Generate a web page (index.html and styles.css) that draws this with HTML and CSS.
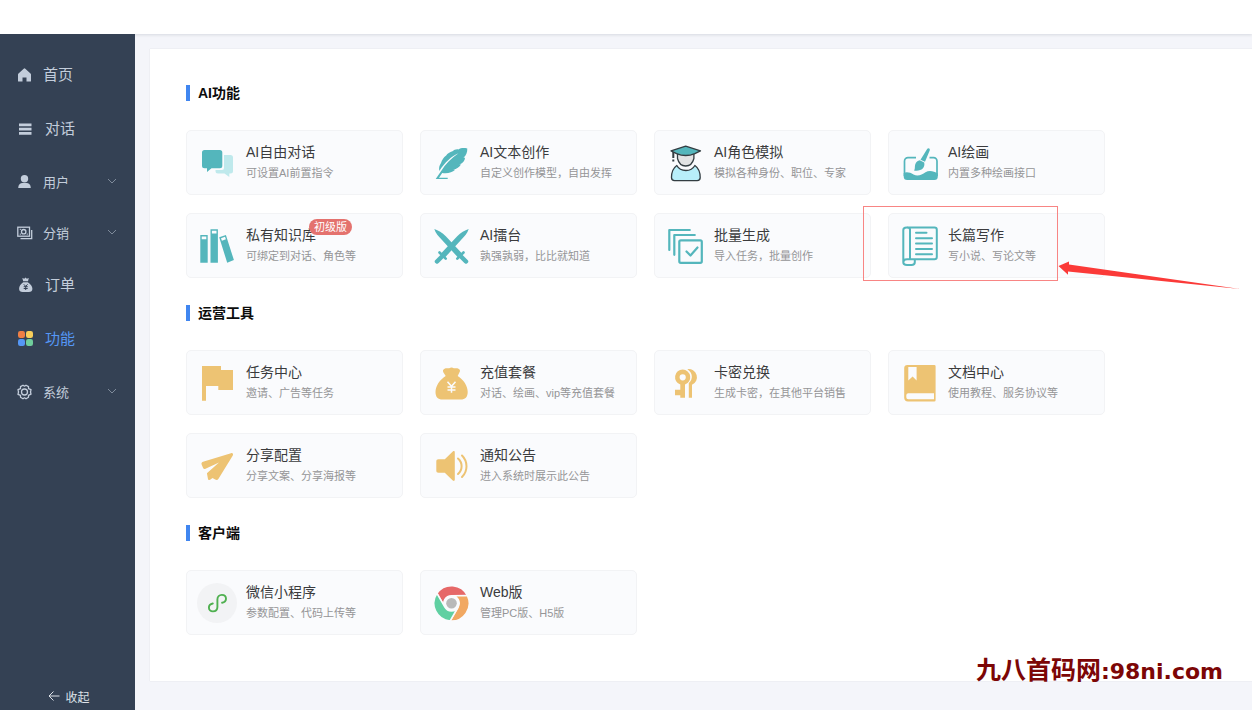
FILE: index.html
```html
<!DOCTYPE html>
<html lang="zh-CN">
<head>
<meta charset="utf-8">
<title>功能</title>
<meta name="viewport" content="width=device-width, initial-scale=1">
<link rel="stylesheet" href="styles.css">
</head>
<body>
<header class="topbar"></header>
<div class="layout">
  <aside class="sidebar">
    <nav class="menu">
      <a class="menu-item" href="#home">
        <svg class="menu-icon" viewBox="0 0 16 16"><path fill="currentColor" d="M6.700 1.700a1.200 1.200 0 0 1 1.600 0L13.500 6.400c.3.300.5.700.5 1.100V14a.6.6 0 0 1-.6.6H9.500V10.500H5.500v4.100H1.600a.6.6 0 0 1-.6-.6V7.500c0-.4.200-.8.500-1.100z"/></svg>
        <span class="menu-label">首页</span>
      </a>
      <a class="menu-item menu-item-wide" href="#chat">
        <svg class="menu-icon" viewBox="0 0 16 16"><path fill="currentColor" d="M1 2.500h12.500v2.800H1zM1 6.700h12.500v2.800H1zM1 10.900h12.500v2.800H1z"/></svg>
        <span class="menu-label">对话</span>
      </a>
      <button class="menu-item menu-group" type="button">
        <svg class="menu-icon" viewBox="0 0 16 16"><circle cx="7.500" cy="4.700" r="3.700" fill="currentColor"/><path fill="currentColor" d="M1.200 14c0-3.200 2-5 4.300-5h4c2.300 0 4.300 1.800 4.300 5z"/></svg>
        <span>用户</span>
        <svg class="chevron" viewBox="0 0 10 10"><path d="M1 2l4 4 4-4"/></svg>
      </button>
      <button class="menu-item menu-group" type="button">
        <svg class="menu-icon" viewBox="0 0 16 16" fill="none" stroke="currentColor" stroke-width="1.300"><rect x=".8" y="2.200" width="11.700" height="9"/><circle cx="6.700" cy="6.700" r="2.200"/><path d="M14.700 5v8.700H3.500M2.800 4.300h1M2.800 9.200h1M9.700 9.200h1"/></svg>
        <span>分销</span>
        <svg class="chevron" viewBox="0 0 10 10"><path d="M1 2l4 4 4-4"/></svg>
      </button>
      <a class="menu-item menu-item-wide" href="#orders">
        <svg class="menu-icon" viewBox="0 0 16 16"><path fill="currentColor" d="M4.300 1l2 .8L7.500.500l1.300 1.300 2-.8-.8 3.300H5.200zM5.200 5.200h4.600c2.800 1.700 4.600 4.300 4.600 6.500 0 2.300-1.300 3.300-3.500 3.300H4.600c-2.200 0-3.500-1-3.500-3.300 0-2.200 1.400-4.800 4.100-6.500z"/><path fill="none" stroke="#344154" d="M5.800 7.300l1.900 2 1.900-2M7.700 9.300v3.700M5.700 9.700h4M5.700 11.500h4"/></svg>
        <span class="menu-label">订单</span>
      </a>
      <a class="menu-item menu-item-wide active" href="#features" aria-current="page">
        <svg class="menu-icon" viewBox="0 0 16 16"><rect x="0" y="0" width="7" height="7" rx="2.200" fill="#ee7f45"/><rect x="8" y="0" width="7" height="7" rx="2.200" fill="#f8ce5b"/><rect x="0" y="8" width="7" height="7" rx="2.200" fill="#5597f5"/><rect x="8" y="8" width="7" height="7" rx="2.200" fill="#6fce9c"/></svg>
        <span class="menu-label">功能</span>
      </a>
      <button class="menu-item menu-group" type="button">
        <svg class="menu-icon" viewBox="0 0 16 16" fill="none" stroke="currentColor" stroke-width="1.300"><path stroke-linejoin="round" d="M6 1.200l1.500 1 1.500-1 2.500 1.400v2l2.500 1-.500 2.400.5 2.200-2.500 1.200v1.800L9 14.800l-1.500-1-1.500 1-2.500-1.500v-1.900L1 10.300 1.500 8 1 5.700l2.500-1.100v-2z"/><circle cx="7.500" cy="8" r="3"/></svg>
        <span>系统</span>
        <svg class="chevron" viewBox="0 0 10 10"><path d="M1 2l4 4 4-4"/></svg>
      </button>
    </nav>
    <button class="collapse" type="button">
      <svg class="collapse-icon" viewBox="0 0 12 12"><path d="M11.500 6H1M5.500 1.500L1 6l4.500 4.500"/></svg>
      <span>收起</span>
    </button>
  </aside>

  <main class="content">
    <div class="panel">
      <section class="section">
        <h2 class="section-title">AI功能</h2>
        <div class="cards">
          <a class="card" href="#free-chat">
            <svg class="card-icon" viewBox="0 0 40 40"><path fill="#bfe9ec" d="M27 12h6.500a2.500 2.500 0 0 1 2.500 2.500v13.500a2.500 2.500 0 0 1-2.500 2.500h-1.200v3.500l-4.800-3.500h-6.500a2.500 2.500 0 0 1-2.500-2.500V27H25a2 2 0 0 0 2-2z"/><path fill="#54b6bc" d="M7.500 7h15.300a2.500 2.500 0 0 1 2.500 2.500v13.300a2.500 2.500 0 0 1-2.500 2.500H14.500L10 29v-3.700H7.500A2.500 2.500 0 0 1 5 22.800V9.500A2.500 2.500 0 0 1 7.500 7z"/></svg>
            <span class="card-text"><span class="card-title">AI自由对话</span><span class="card-desc">可设置AI前置指令</span></span>
          </a>
          <a class="card" href="#writing">
            <svg class="card-icon" viewBox="0 0 40 40"><path fill="#54b6bc" d="M36.300 5.500c-4-.8-6.800-.3-8.800 1-2-.5-4.500.3-6 1.800-2.800.7-5 2.300-6.300 4.200-2.700 2-4.400 4.700-5.200 7.500-1.800 2.500-2.200 5-1.700 8C14 19.500 20.500 13 27.500 10.300 20.800 14.800 14.300 21 10 28.300L4.700 36h12v-1.300H8l3.200-4.700c5.800.8 9.800-.5 13-3.200l-2-.3c3.500-.5 6.300-2.300 7.800-5l-1.800-.2c3.300-.6 5.600-3.300 5.800-6.500l-1.500-.2c2.500-1.800 4-5 3.800-9.300z"/></svg>
            <span class="card-text"><span class="card-title">AI文本创作</span><span class="card-desc">自定义创作模型，自由发挥</span></span>
          </a>
          <a class="card" href="#roles">
            <svg class="card-icon" viewBox="0 0 40 40" stroke="#333d42" stroke-width="1.300" stroke-linejoin="round"><path fill="#e2e3e4" d="M12.500 10v5.500c1.200 4.700 4.500 7.500 8.200 7.500s7-2.800 8.200-7.500V10z"/><path fill="#54b6bc" d="M6 7.800L20.700 3.200l14.800 4.600-5.700 2.800c-5.500 2.300-12.700 2.300-18.200 0z"/><path fill="#b8effa" d="M11.800 22.500c-3.500 2.500-5.300 7-5.300 12 0 2 1 3.100 3 3.100h22.700c2 0 3-1.100 3-3.100 0-5-1.800-9.500-5.300-12-2 3.500-5.200 5-9 5s-7.200-1.500-9.100-5z"/><path fill="none" stroke-width="2" d="M8.300 9v6M8.300 16.500v2"/></svg>
            <span class="card-text"><span class="card-title">AI角色模拟</span><span class="card-desc">模拟各种身份、职位、专家</span></span>
          </a>
          <a class="card" href="#painting">
            <svg class="card-icon" viewBox="0 0 40 40"><path fill="none" stroke="#54b6bc" stroke-width="1.700" d="M17 14.700H9a3.500 3.500 0 0 0-3.500 3.500V33M30.500 14.700h4a3.500 3.500 0 0 1 3.500 3.500V33"/><path fill="#54b6bc" d="M4.700 30c3-1.500 6.500-.5 9.800 1.500 4.500 2.500 8.500 0 12-2.200 3.800-2.300 8.500-1 12.300 1.200v3a3.500 3.500 0 0 1-3.500 3.500H8.200a3.500 3.500 0 0 1-3.500-3.500z"/><path fill="#54b6bc" d="M21.500 16.800L28 6.200c1-1.700 3.500-.7 2.700 1.200L26 18.700zM20.800 17.300l4.400 2.200c1.300 5.500-3.500 9.200-10.200 8 1.400-1.500.5-3.800 1.200-6 .8-2.600 2.600-4 4.600-4.200z"/></svg>
            <span class="card-text"><span class="card-title">AI绘画</span><span class="card-desc">内置多种绘画接口</span></span>
          </a>
          <a class="card" href="#knowledge">
            <svg class="card-icon" viewBox="0 0 40 40"><path fill="#54b6bc" d="M3.300 9h7.400v27.700H3.300zM13.500 3.300h7.400v33.400h-7.400zM22.200 11.300L28.900 8.900l8 25.200-6.700 2.600z"/><path fill="#fafbfd" d="M4.700 10.500h4.600v2.800H4.700zM14.900 4.800h4.600v2.800h-4.600zM24 12.200l4-1.500.9 2.600-4 1.500z"/></svg>
            <span class="card-text"><span class="card-title">私有知识库</span><span class="card-desc">可绑定到对话、角色等</span></span>
            <span class="badge">初级版</span>
          </a>
          <a class="card" href="#arena">
            <svg class="card-icon" viewBox="0 0 40 40"><g fill="#54b6bc"><path d="M3.300 3c4 1.300 8 3.800 11.500 7.200L31.500 28l-4 4L11 14C7.500 10.500 4.500 7 3.300 3z"/><path d="M37.700 3c-4 1.300-8 3.800-11.500 7.200L9.500 28l4 4L30 14c3.500-3.500 6.500-7 7.700-11z"/></g><g fill="none" stroke="#54b6bc" stroke-linecap="round"><path stroke-width="2.600" d="M8.500 26.500l6.200 6.200M32.500 26.500l-6.200 6.200"/><path stroke-width="4.500" d="M11 30.500l-5 5M30 30.500l5 5"/></g></svg>
            <span class="card-text"><span class="card-title">AI擂台</span><span class="card-desc">孰强孰弱，比比就知道</span></span>
          </a>
          <a class="card" href="#batch">
            <svg class="card-icon" viewBox="0 0 40 40" fill="none" stroke="#54b6bc" stroke-width="2.200" stroke-linecap="round" stroke-linejoin="round"><path d="M4.300 24V4h20.500M9.300 28.800V9h20.500"/><rect x="14.300" y="14.300" width="22.500" height="22.500" rx="1.500"/><path d="M21.500 25.500l4 4 7-8"/></svg>
            <span class="card-text"><span class="card-title">批量生成</span><span class="card-desc">导入任务，批量创作</span></span>
          </a>
          <a class="card" href="#long-writing">
            <svg class="card-icon" viewBox="0 0 40 40" fill="none" stroke="#54b6bc" stroke-width="2"><path d="M11 33V3.500C11 2 9.500 1.500 7.500 1.500S4.300 2.500 4.300 4v32.500M8 1.500h27.500c1.500 0 2.300.8 2.300 2.300V31c0 1.300-.8 2.200-2.300 2.200H8c-2.500 0-3.700 1.300-3.700 3 0 1.800 1.500 2.800 3.700 2.800h4.500c2 0 3.300-1.200 3.300-2.800v-3"/><path stroke-width="2" stroke-linecap="round" d="M17 6.800h10.500M17 12.300h16M17 17.500h16M17 23h16M17 28.300h16"/></svg>
            <span class="card-text"><span class="card-title">长篇写作</span><span class="card-desc">写小说、写论文等</span></span>
            <svg class="callout" viewBox="0 0 380 86" aria-hidden="true"><rect x="1.500" y="1.500" width="194" height="74" fill="none" stroke="#f88584"/><path fill="#fb3a38" d="M196.500 61L207 56.500v3L378 84 206 66.500v3.200z"/></svg>
          </a>
        </div>
      </section>

      <section class="section">
        <h2 class="section-title">运营工具</h2>
        <div class="cards">
          <a class="card" href="#tasks">
            <svg class="card-icon" viewBox="0 0 40 40"><path fill="#edc373" d="M5 3h19v4h12v20H21.300v-4H9v14.700H5z"/></svg>
            <span class="card-text"><span class="card-title">任务中心</span><span class="card-desc">邀请、广告等任务</span></span>
          </a>
          <a class="card" href="#packages">
            <svg class="card-icon" viewBox="0 0 40 40"><path fill="#edc373" d="M14 5.500c1.800-.8 3 .2 4.200-.3 1.500-.9 3.300-.9 4.600 0 1.400.5 2.500-.5 4.200.3 2 .7 2.500 2.400 1.500 3.700L26.700 13c5.800 3.500 10 10 10 16 0 5.200-2.500 7.500-7 7.500H11.500c-4.500 0-7-2.300-7-7.500 0-6 4.400-12.500 10.200-16L12.300 9.200C11.500 7.700 12.200 6.200 14 5.500z"/><path fill="none" stroke="#fafbfd" stroke-width="1.500" d="M16.500 18.800l4 4.500 4-4.500M20.500 23.300v6.500M16.500 24h8M16.500 27h8"/></svg>
            <span class="card-text"><span class="card-title">充值套餐</span><span class="card-desc">对话、绘画、vip等充值套餐</span></span>
          </a>
          <a class="card" href="#cards">
            <svg class="card-icon" viewBox="0 0 40 40"><path fill="#edc373" fill-rule="evenodd" d="M17.700 6.500a7.700 7.700 0 0 1 2.300 15v13.200h-4.700v-2.500H10v-5.500h5.300V21.500a7.700 7.700 0 0 1 2.400-15zm0 4.700a3 3 0 1 0 0 6.200 3 3 0 0 0 0-6.200z"/><path fill="#edc373" d="M22.300 6.200a8.200 8.200 0 0 1 4.700 15.600v12.900h-3.200V20c4.500-4 4-10.500-1.500-13.800z"/></svg>
            <span class="card-text"><span class="card-title">卡密兑换</span><span class="card-desc">生成卡密，在其他平台销售</span></span>
          </a>
          <a class="card" href="#docs">
            <svg class="card-icon" viewBox="0 0 40 40"><path fill="#edc373" d="M8.300 2h27a1.300 1.300 0 0 1 1.300 1.300v34a1.300 1.300 0 0 1-1.300 1.300H9c-2.500 0-3.800-1.500-3.800-3.800V5c0-2 1.200-3 3.100-3z"/><path fill="#fafbfd" d="M9.300 4h8.300v13.500l-4-4-4.300 4zM9.300 30.300H35v6H9.300a2 2 0 0 1-2-2v-2a2 2 0 0 1 2-2z"/></svg>
            <span class="card-text"><span class="card-title">文档中心</span><span class="card-desc">使用教程、服务协议等</span></span>
          </a>
          <a class="card" href="#share">
            <svg class="card-icon" viewBox="0 0 40 40"><path fill="#edc373" d="M34 7.200c1.700-.4 2.500.8 1.800 2.300L21.500 32.800c-.8 1.300-2 1.700-3.300.8L15.500 32l-2 1.600c-1.200.8-2.500.2-2.600-1.200l-1-5.200L22 16.500 8.500 22.700c-1.200.5-2 .1-2.500-1l-1.300-3c-.5-1.500-.2-2.500 1.300-3z"/></svg>
            <span class="card-text"><span class="card-title">分享配置</span><span class="card-desc">分享文案、分享海报等</span></span>
          </a>
          <a class="card" href="#notice">
            <svg class="card-icon" viewBox="0 0 40 40"><path fill="#edc373" d="M7.500 13.300h6.300l8-7.700c1-.9 2-.5 2 .9v27c0 1.400-1 1.800-2 .9l-8-7.700H7.500c-1.500 0-2.200-.7-2.200-2.200v-9c0-1.500.7-2.200 2.200-2.200z"/><path fill="none" stroke="#edc373" stroke-width="2" stroke-linecap="round" d="M27 12.500c4.800 4.200 4.800 11 0 15.500M31 9.500c6 6 6 15.500 0 21.500"/></svg>
            <span class="card-text"><span class="card-title">通知公告</span><span class="card-desc">进入系统时展示此公告</span></span>
          </a>
        </div>
      </section>

      <section class="section">
        <h2 class="section-title">客户端</h2>
        <div class="cards">
          <a class="card" href="#miniapp">
            <svg class="card-icon" viewBox="0 0 40 40"><circle cx="20" cy="20" r="20" fill="#f2f3f5"/><path fill="none" stroke="#4fb050" stroke-width="1.900" stroke-linecap="round" d="M15.800 20.500c-2.500.5-3.900 2-3.900 4 0 2.200 1.700 3.900 4 3.900 2.600 0 4.500-1.700 4.500-4.400v-7.600c0-2.700 1.900-4.500 4.400-4.500s4.200 1.700 4.200 3.900c0 2-1.400 3.500-3.900 4"/></svg>
            <span class="card-text"><span class="card-title">微信小程序</span><span class="card-desc">参数配置、代码上传等</span></span>
          </a>
          <a class="card" href="#web">
            <svg class="card-icon" viewBox="0 0 40 40"><g transform="translate(20.500 20.300)"><g stroke="#fafbfd" stroke-width="1.600"><path fill="#e66868" d="M-14.600-10A17.700 17.700 0 0 1 16-7.600L0-7.600A7.600 7.600 0 0 0-6.600 3.800z"/><path fill="#f1a862" transform="rotate(120)" d="M-14.600-10A17.700 17.700 0 0 1 16-7.600L0-7.600A7.600 7.600 0 0 0-6.600 3.800z"/><path fill="#60d0a2" transform="rotate(240)" d="M-14.600-10A17.700 17.700 0 0 1 16-7.600L0-7.600A7.600 7.600 0 0 0-6.600 3.800z"/></g><circle r="7.500" fill="#fafbfd"/><circle r="5.300" fill="#b9b9b9"/></g></svg>
            <span class="card-text"><span class="card-title">Web版</span><span class="card-desc">管理PC版、H5版</span></span>
          </a>
        </div>
      </section>
      <p class="watermark">九八首码网<span class="watermark-url">:98ni.com</span></p>
    </div>
  </main>
</div>
</body>
</html>
```

FILE: styles.css
```css
* {
  box-sizing: border-box;
}

body {
  margin: 0;
  min-height: 100vh;
  display: flex;
  flex-direction: column;
  background: #f4f5fa;
  color: #3b3b3d;
  font-family: "Liberation Sans", "Noto Sans CJK SC", sans-serif;
}

.topbar {
  flex: none;
  height: 34px;
  background: #fff;
  box-shadow: 0 1px 3px rgba(0, 21, 41, 0.12);
}

.layout {
  flex: 1;
  display: flex;
}

/* Sidebar */

.sidebar {
  flex: none;
  width: 135px;
  display: flex;
  flex-direction: column;
  justify-content: space-between;
  padding-top: 14px;
  background: #344154;
  z-index: 1;
}

.menu {
  display: flex;
  flex-direction: column;
}

.menu-item {
  display: flex;
  align-items: center;
  gap: 10px;
  height: 54px;
  padding: 0 18px 0 17px;
  border: 0;
  background: none;
  color: #c3cddb;
  font-family: inherit;
  font-size: 15px;
  text-align: left;
  text-decoration: none;
  cursor: pointer;
}

.menu-item-wide {
  padding-left: 18px;
  gap: 11px;
}

.menu-label {
  padding-bottom: 3px;
}

.menu-group {
  height: 51px;
  font-size: 13px;
}

.menu-item.active {
  color: #5597f5;
}

.menu-icon {
  flex: none;
  width: 16px;
  height: 16px;
}

.chevron {
  width: 10px;
  height: 10px;
  margin-left: auto;
  fill: none;
  stroke: #7f8b9b;
}

.collapse {
  display: flex;
  align-items: center;
  justify-content: center;
  gap: 5px;
  height: 28px;
  padding: 0 0 0 3px;
  border: 0;
  background: none;
  color: #dde2e8;
  font-family: inherit;
  font-size: 12px;
  cursor: pointer;
}

.collapse-icon {
  width: 12px;
  height: 12px;
  fill: none;
  stroke: currentColor;
}

/* Content */

.content {
  flex: 1;
  min-width: 0;
  padding: 15px 0 29px 15px;
  overflow: hidden;
}

.panel {
  position: relative;
  padding: 36px 36px 46px;
  background: #fff;
  box-shadow: 0 0 1px rgba(0, 0, 0, 0.15);
}

.section + .section {
  margin-top: 27px;
}

.section-title {
  display: flex;
  align-items: center;
  height: 16px;
  margin: 0 0 29px;
  padding-left: 8px;
  border-left: 4px solid #4086f0;
  color: #0c0c0c;
  font-size: 14px;
  line-height: 16px;
}

.cards {
  display: grid;
  grid-template-columns: repeat(auto-fill, 217px);
  gap: 18px 17px;
}

.card {
  position: relative;
  display: flex;
  align-items: center;
  gap: 9px;
  height: 65px;
  padding: 0 10px;
  border: 1px solid #f2f3f5;
  border-radius: 5px;
  background: #fafbfd;
  color: inherit;
  text-decoration: none;
}

.card-icon {
  flex: none;
  width: 40px;
  height: 40px;
}

.card-text {
  display: flex;
  flex-direction: column;
  white-space: nowrap;
}

.card-title {
  font-size: 14px;
  line-height: 21px;
}

.card-desc {
  color: #959597;
  font-size: 11px;
  line-height: 20px;
}

.badge {
  position: absolute;
  top: 5px;
  left: 122px;
  padding: 0 5px;
  border-radius: 8px;
  background: #e4726e;
  color: #fff;
  font-size: 11px;
  line-height: 16px;
}

.callout {
  position: absolute;
  top: -9px;
  left: -27px;
  z-index: 1;
  width: 380px;
  height: 86px;
  pointer-events: none;
}

.watermark {
  position: absolute;
  right: 29px;
  bottom: -3px;
  margin: 0;
  color: #7c0606;
  font-family: "DejaVu Sans", "Noto Sans CJK SC", sans-serif;
  font-size: 25px;
  font-weight: bold;
  line-height: 25px;
  white-space: nowrap;
}

.watermark-url {
  font-size: 22px;
}
```
